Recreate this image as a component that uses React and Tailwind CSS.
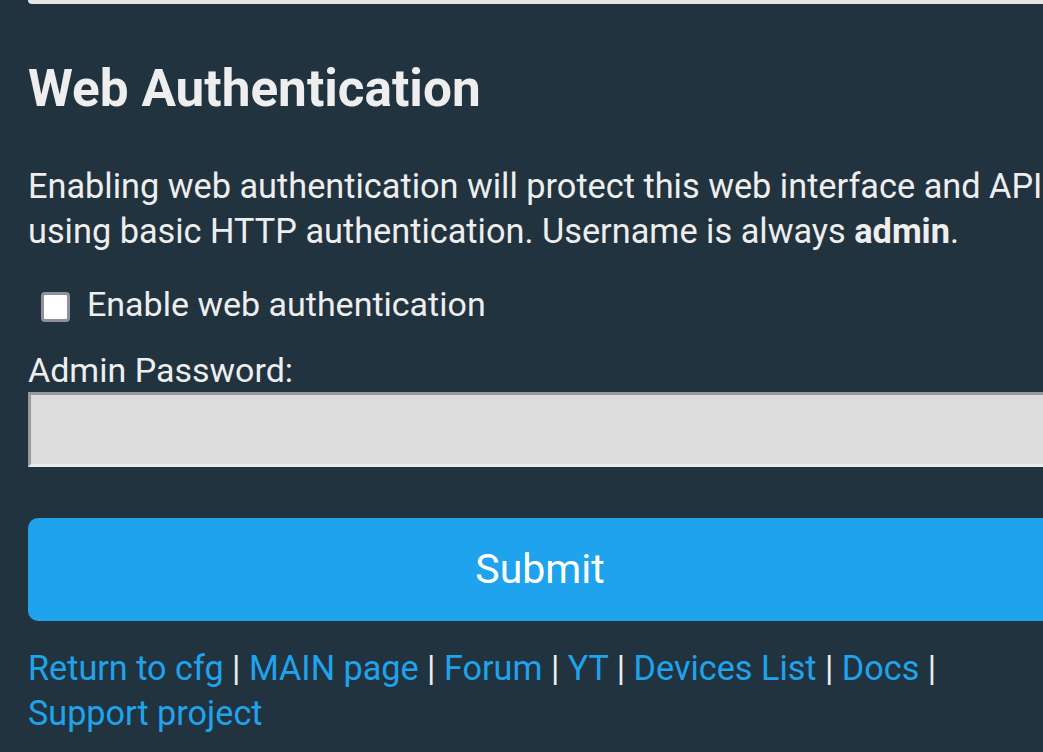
export default function App() {
  const links = ['Return to cfg', 'MAIN page', 'Forum', 'YT', 'Devices List', 'Docs']
  return (
    <div className="min-h-[752px] bg-[#223340] overflow-hidden" style={{ fontFamily: 'Roboto, "Noto Sans", sans-serif' }}>
      <div className="ml-[28px] w-[1024px] text-[#eeeeee]">
        <div className="h-[4px] bg-[#e6e6e6] rounded-b-[6px]" />
        <h2 className="mt-[55px] text-[51.3px] leading-[60px] font-bold text-[#eeeeee]">Web Authentication</h2>
        <p className="mt-[45px] text-[34.3px] leading-[45px]">
          Enabling web authentication will protect this web interface and API using basic HTTP authentication. Username is always <b>admin</b>.
        </p>
        <label className="mt-[28px] flex items-center gap-[17px] text-[34px] leading-[45px]">
          <span className="ml-[13px] mt-[4px] w-[29px] h-[30px] rounded-[4px] bg-white border-[3px] border-[#8f8f9d]" />
          Enable web authentication
        </label>
        <div className="mt-[21px] text-[34px] leading-[45px]">Admin Password:</div>
        <div className="mt-[-1px] h-[75px] bg-[#dcdcdc] border-[3px] border-t-[#9a9a9a] border-l-[#9a9a9a] border-b-[#ececec] border-r-[#ececec]" />
        <button className="mt-[51px] w-full h-[103px] rounded-[10px] bg-[#1fa3ec] text-white text-[41px]">Submit</button>
        <div className="mt-[25px] text-[34.2px] leading-[45px] text-[#eeeeee]">
          {links.map((l) => (
            <span key={l}>
              <a className="text-[#1fa3ec]">{l}</a> |{' '}
            </span>
          ))}
          <a className="text-[#1fa3ec]">Support project</a>
        </div>
      </div>
    </div>
  )
}
